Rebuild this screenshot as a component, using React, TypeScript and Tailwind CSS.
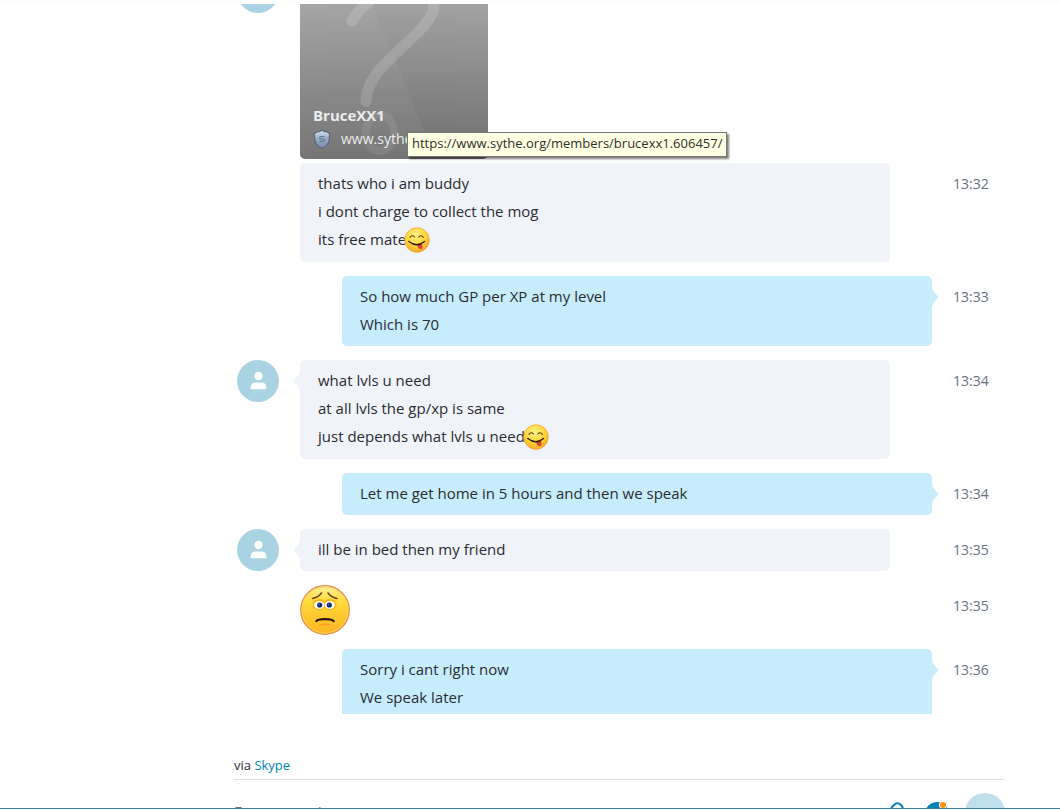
import React from 'react'

type Message = {
  time: string
  lines: string[]
  mine?: boolean
  avatar?: boolean
  wink?: boolean
  sad?: boolean
}

const messages: Message[] = [
  { time: '13:32', lines: ['thats who i am buddy', 'i dont charge to collect the mog', 'its free mate'], wink: true },
  { time: '13:33', lines: ['So how much GP per XP at my level', 'Which is 70'], mine: true },
  { time: '13:34', lines: ['what lvls u need', 'at all lvls the gp/xp is same', 'just depends what lvls u need'], avatar: true, wink: true },
  { time: '13:34', lines: ['Let me get home in 5 hours and then we speak'], mine: true },
  { time: '13:35', lines: ['ill be in bed then my friend'], avatar: true },
  { time: '13:35', lines: [], sad: true },
  { time: '13:36', lines: ['Sorry i cant right now', 'We speak later'], mine: true },
]

const Avatar = () => (
  <svg className="ml-[3px] size-[42px]" viewBox="0 0 42 42" role="img" aria-label="Contact">
    <circle cx="21" cy="21" r="21" fill="#a9d3e2" />
    <circle cx="21.5" cy="16" r="4.2" fill="#fff" />
    <path d="M13.5 28.5C13.5 24.500 15.500 22.500 18.500 22.500h6c3 0 5 2 5 6q0 .8-.8.8H14.300q-.8 0-.8-.8z" fill="#fff" />
  </svg>
)

const TongueFace = () => (
  <svg className="size-[26px] shrink-0" viewBox="0 0 26 26" role="img" aria-label="Tongue out">
    <defs>
      <radialGradient id="tongueFill" cx="45%" cy="30%" r="70%">
        <stop offset="0" stopColor="#fff08a" />
        <stop offset=".55" stopColor="#ffd93b" />
        <stop offset="1" stopColor="#f7a823" />
      </radialGradient>
    </defs>
    <circle cx="13" cy="13" r="12.300" fill="url(#tongueFill)" stroke="#f0a437" strokeWidth=".8" />
    <path d="M6 10.300q2.200-3 4.600-.3M14.800 10q2.300-2.700 4.600.3" fill="none" stroke="#5f3c10" strokeWidth="1.100" strokeLinecap="round" />
    <path d="M13 18l5-1.300 .6 3.500q-.6 2.600-2.500 1.900-2.500-1-3.100-4.100z" fill="#d9433f" />
    <path d="M4.800 14.500q8.200 6.500 15.600 0" fill="none" stroke="#3a1710" strokeWidth="1.400" strokeLinecap="round" />
  </svg>
)

const SadFace = () => (
  <svg className="size-[50px]" viewBox="0 0 50 50" role="img" aria-label="Sad">
    <defs>
      <linearGradient id="sadFill" x1="0" y1="0" x2="0" y2="1">
        <stop offset="0" stopColor="#fff3a0" />
        <stop offset=".3" stopColor="#ffdc3c" />
        <stop offset="1" stopColor="#ffb321" />
      </linearGradient>
    </defs>
    <circle cx="25" cy="25" r="24.300" fill="url(#sadFill)" stroke="#e58a3c" strokeWidth="1.200" />
    <circle cx="25" cy="25" r="23" fill="none" stroke="#ffd36b" strokeWidth="1" />
    <path d="M12.500 13.500q5.500-1 9-5.500M28 8q3.500 4.500 9 5.500" fill="none" stroke="#70401b" strokeWidth="1.500" strokeLinecap="round" />
    <ellipse cx="19" cy="19.500" rx="6.500" ry="5.800" fill="#ffba18" />
    <ellipse cx="30" cy="19.500" rx="6.500" ry="5.800" fill="#ffba18" />
    <ellipse cx="19.200" cy="20" rx="5" ry="4" fill="#fff" />
    <ellipse cx="29.800" cy="20" rx="5" ry="4" fill="#fff" />
    <circle cx="19.700" cy="20" r="2.600" fill="#17265c" />
    <circle cx="29.300" cy="20" r="2.600" fill="#17265c" />
    <circle cx="19" cy="19.500" r=".8" fill="#6281cc" />
    <circle cx="28.600" cy="19.500" r=".8" fill="#6281cc" />
    <path d="M16.500 36q1-1.900 8.500-1.900t8.500 1.900" fill="none" stroke="#24100b" strokeWidth="2.400" strokeLinecap="round" />
    <path d="M19 39.500q6-2 12 0-6 1.800-12 0z" fill="#ff981c" />
  </svg>
)

const Shield = () => (
  <svg className="h-5 w-[18px]" viewBox="0 0 18 20" aria-hidden="true">
    <defs>
      <linearGradient id="shieldFill" x1="0" y1="0" x2="0" y2="1">
        <stop offset="0" stopColor="#dbe7f2" />
        <stop offset=".5" stopColor="#92a9c2" />
        <stop offset="1" stopColor="#7891ae" />
      </linearGradient>
    </defs>
    <path d="M9 1q2.500 2.300 5 1.700L17 5q-1 1.800-.6 5-.8 6.500-7.400 9.200Q2.400 16.500 1.600 10 2 6.800 1 5l3-2.300Q6.500 3.300 9 1z" fill="url(#shieldFill)" stroke="#59687a" strokeWidth="1.200" />
    <path d="M11.500 7.500H8Q6.800 7.500 6.800 8.700T8 10h2.300q1.200 0 1.200 1.100T10.300 12.300H6.500" fill="none" stroke="#647b96" strokeWidth="1.200" />
  </svg>
)

const Tail = ({ mine }: { mine?: boolean }) => (
  <svg
    className={mine ? 'absolute top-[11px] -right-1.5 h-5 w-1.5 text-[#c7ecfc]' : 'absolute top-[11px] -left-1.5 h-5 w-1.5 -scale-x-100 text-[#f0f3f8]'}
    viewBox="0 0 6 20"
    aria-hidden="true"
  >
    <path d="M0 0q.6 4 3.500 6.500Q6 8.500 6 10t-2.500 3.500Q.6 16 0 20z" fill="currentColor" />
  </svg>
)

const LinkCard = () => (
  <div className="relative size-[188px]">
    <a href="#profile" className="relative flex size-full flex-col justify-end overflow-hidden rounded-[5px] bg-linear-to-b from-[#adadae] to-[#707070] px-[13px] pb-2 text-[#ececec]">
      <svg className="absolute inset-0 size-full" viewBox="0 0 188 188" aria-hidden="true">
        <path d="M0 0H59L135 188H0z" fill="#fff" opacity=".04" />
        <g fill="none" stroke="#fff" strokeLinecap="round" opacity=".15">
          <path d="M52 50C56 42 62 36 70 30C90 14 132 8 134 34C134 62 66 92 66 130" strokeWidth="11" />
          <ellipse cx="80" cy="162" rx="14" ry="18" strokeWidth="8" opacity=".5" />
        </g>
      </svg>
      <strong className="relative text-[15px] leading-6 font-bold">BruceXX1</strong>
      <span className="relative flex items-center gap-2.5 text-[14px] leading-6">
        <Shield />
        www.sythe.org
      </span>
    </a>
    <div role="tooltip" className="absolute top-[161px] left-[107px] z-10 border border-[#767676] bg-[#ffffe1] px-1 pb-0.5 text-[13px] leading-[21px] whitespace-nowrap text-[#303030] shadow-[2px_2px_2px_#00000080]">
      https://www.sythe.org/members/brucexx1.606457/
    </div>
  </div>
)

const MessageRow = ({ message }: { message: Message }) => {
  const { time, lines, mine, avatar, wink, sad } = message

  return (
    <li className="grid grid-cols-[66px_1fr_73px]">
      <div>{avatar && <Avatar />}</div>
      {sad ? (
        <SadFace />
      ) : (
        <div className={mine ? 'relative ml-[42px] rounded-[5px] bg-[#c7ecfc] px-[18px] pt-1.5 pb-2' : 'relative mr-[42px] rounded-[5px] bg-[#f0f3f8] px-[18px] pt-1.5 pb-2'}>
          {(mine || avatar) && <Tail mine={mine} />}
          {lines.map((line, i) => (
            <p key={line} className={wink && i === lines.length - 1 ? 'flex h-[29px] items-start' : ''}>
              {line}
              {wink && i === lines.length - 1 && <span className="-ml-0.5 pt-0.5"><TongueFace /></span>}
            </p>
          ))}
        </div>
      )}
      <time className="py-[7px] pl-[21px] text-[14px] leading-7 text-[#66707f]">{time}</time>
    </li>
  )
}

const App = () => {
  return (
    <div className="flex h-screen flex-col overflow-hidden bg-white font-['Open_Sans','Noto_Sans',sans-serif] text-[15px] leading-7 text-[#2b2c33]">
      <div className="h-1 shrink-0 bg-[#fdfdfd]" />
      <main className="min-h-0 flex-1 overflow-hidden pr-[55px] pl-[234px]">
        <div className="-mt-[33px] mb-1 grid grid-cols-[66px_1fr_73px]">
          <Avatar />
          <LinkCard />
        </div>
        <ul className="flex flex-col gap-3.5">
          {messages.map((message, i) => (
            <MessageRow key={i} message={message} />
          ))}
        </ul>
      </main>
      <footer className="flex h-24 shrink-0 flex-col border-b border-white">
        <div className="min-h-0 flex-1 overflow-hidden border-b border-[#3c7fb1] pr-[55px] pl-[234px]">
          <p className="border-b border-[#d9e4ea] pt-[37px] text-[13px]">
            via <a href="#skype" className="text-[#0084b8]">Skype</a>
          </p>
          <div className="flex items-start pt-[13px]">
            <input aria-label="Message" placeholder="Escreva aqui" className="mt-1 h-7 min-w-0 flex-1 placeholder:text-[#66707f]" />
            <button aria-label="Attach" className="mt-[9px] mr-5">
              <svg className="h-5 w-4" viewBox="0 0 16 20" fill="none" stroke="#0080b5" strokeWidth="2">
                <path d="M2 6l3-3q3.500-3.500 7 0t0 7l-6 6" />
              </svg>
            </button>
            <button aria-label="Emoticons" className="mt-[9px] mr-4">
              <svg className="size-6 overflow-visible" viewBox="0 0 24 24">
                <circle cx="12" cy="12" r="12" fill="#0080b5" />
                <circle cx="18" cy="3" r="4" fill="#fff" />
                <circle cx="18" cy="3" r="3" fill="#ff8c00" />
              </svg>
            </button>
            <button aria-label="Send" className="size-10 rounded-full bg-[#c0dfec]" />
          </div>
        </div>
      </footer>
    </div>
  )
}

export default App
